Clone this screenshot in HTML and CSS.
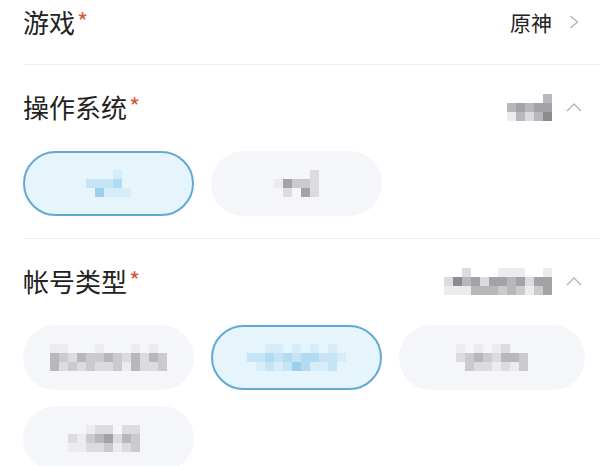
FILE: index.html
```html
<!DOCTYPE html>
<html lang="zh">
<head>
<meta charset="utf-8">
<link rel="stylesheet" href="styles.css">
</head>
<body>
<div class="form">
  <div class="row row-top">
    <div class="label">游戏<span class="req">*</span></div>
    <div class="value">
      <span class="value-text">原神</span>
      <svg class="chev-right" width="10" height="14" viewBox="0 0 10 14"><polyline points="1.5,1 8.5,7 1.5,13" fill="none" stroke="#b4b4b4" stroke-width="1.4"/></svg>
    </div>
  </div>
  <div class="divider"></div>

  <div class="section">
    <div class="row">
      <div class="label">操作系统<span class="req">*</span></div>
      <div class="value">
        <div class="mosaic">
          <div class="mr"><i></i><i></i><i></i><i></i><i class="g4"></i></div>
          <div class="mr"><i class="g4"></i><i class="g5"></i><i class="g4"></i><i class="g5"></i><i class="g5"></i></div>
          <div class="mr"><i class="g1"></i><i class="g4"></i><i class="g2"></i><i class="g4"></i><i class="g6"></i></div>
        </div>
        <svg class="chev-up" width="16" height="10" viewBox="0 0 16 10"><polyline points="1,9 8,2 15,9" fill="none" stroke="#b4b4b4" stroke-width="1.4"/></svg>
      </div>
    </div>
    <div class="chips">
      <div class="chip chip-on">
        <div class="mosaic">
          <div class="mr"><i></i><i></i><i></i><i class="b1"></i><i></i></div>
          <div class="mr"><i class="b2"></i><i class="b2"></i><i class="b2"></i><i class="b3"></i><i></i></div>
          <div class="mr"><i></i><i class="b4"></i><i class="b1"></i><i class="b1"></i><i class="b1"></i></div>
        </div>
      </div>
      <div class="chip">
        <div class="mosaic">
          <div class="mr"><i></i><i></i><i></i><i></i><i class="g2"></i></div>
          <div class="mr"><i class="g1"></i><i class="g5"></i><i class="g3"></i><i class="g3"></i><i class="g2"></i></div>
          <div class="mr"><i></i><i class="g2"></i><i></i><i class="g5"></i><i class="g2"></i></div>
        </div>
      </div>
    </div>
  </div>
  <div class="divider"></div>

  <div class="section">
    <div class="row">
      <div class="label">帐号类型<span class="req">*</span></div>
      <div class="value">
        <div class="mosaic">
          <div class="mr"><i></i><i></i><i class="g2"></i><i></i><i></i><i></i><i class="g1"></i><i class="g1"></i><i class="g1"></i><i></i><i></i><i class="g1"></i></div>
          <div class="mr"><i class="g2"></i><i class="g6"></i><i class="g4"></i><i class="g5"></i><i class="g2"></i><i class="g5"></i><i class="g5"></i><i class="g4"></i><i class="g5"></i><i class="g2"></i><i class="g5"></i><i class="g5"></i></div>
          <div class="mr"><i class="g1"></i><i class="g1"></i><i class="g1"></i><i class="g4"></i><i class="g4"></i><i class="g4"></i><i class="g3"></i><i class="g4"></i><i class="g3"></i><i class="g1"></i><i class="g3"></i><i class="g5"></i></div>
        </div>
        <svg class="chev-up" width="16" height="10" viewBox="0 0 16 10"><polyline points="1,9 8,2 15,9" fill="none" stroke="#b4b4b4" stroke-width="1.4"/></svg>
      </div>
    </div>
    <div class="chips">
      <div class="chip">
        <div class="mosaic">
          <div class="mr"><i class="g1"></i><i class="g1"></i><i></i><i></i><i></i><i class="g1"></i><i></i><i></i><i></i><i class="g1"></i><i></i><i class="g1"></i><i></i></div>
          <div class="mr"><i class="g4"></i><i class="g3"></i><i class="g2"></i><i class="g4"></i><i class="g3"></i><i class="g3"></i><i class="g4"></i><i class="g3"></i><i class="g2"></i><i class="g4"></i><i class="g2"></i><i class="g4"></i><i class="g3"></i></div>
          <div class="mr"><i class="g4"></i><i class="g2"></i><i class="g3"></i><i class="g2"></i><i class="g3"></i><i class="g2"></i><i class="g2"></i><i class="g3"></i><i class="g1"></i><i class="g4"></i><i class="g2"></i><i class="g2"></i><i class="g3"></i></div>
        </div>
      </div>
      <div class="chip chip-on">
        <div class="mosaic">
          <div class="mr"><i></i><i></i><i class="b1"></i><i class="b1"></i><i></i><i class="b1"></i><i></i><i class="b1"></i><i></i><i class="b1"></i><i></i></div>
          <div class="mr"><i class="b2"></i><i class="b2"></i><i class="b3"></i><i class="b2"></i><i class="b3"></i><i class="b2"></i><i class="b3"></i><i class="b3"></i><i class="b2"></i><i class="b2"></i><i class="b1"></i></div>
          <div class="mr"><i></i><i class="b1"></i><i class="b2"></i><i class="b1"></i><i class="b2"></i><i class="b4"></i><i class="b3"></i><i class="b1"></i><i class="b1"></i><i class="b2"></i><i></i></div>
        </div>
      </div>
      <div class="chip chip-wide">
        <div class="mosaic">
          <div class="mr"><i class="g1"></i><i></i><i class="g1"></i><i></i><i class="g1"></i><i class="g2"></i><i></i><i></i></div>
          <div class="mr"><i class="g2"></i><i class="g3"></i><i class="g4"></i><i class="g3"></i><i class="g2"></i><i class="g4"></i><i class="g4"></i><i class="g3"></i></div>
          <div class="mr"><i></i><i class="g3"></i><i class="g2"></i><i class="g2"></i><i class="g1"></i><i class="g2"></i><i class="g1"></i><i class="g3"></i></div>
        </div>
      </div>
      <div class="chip">
        <div class="mosaic">
          <div class="mr"><i></i><i></i><i class="g1"></i><i class="g2"></i><i class="g2"></i><i></i><i class="g2"></i><i class="g2"></i><i></i></div>
          <div class="mr"><i class="g2"></i><i class="g1"></i><i class="g3"></i><i class="g4"></i><i class="g5"></i><i class="g2"></i><i class="g4"></i><i class="g3"></i><i></i></div>
          <div class="mr"><i class="g1"></i><i class="g1"></i><i class="g2"></i><i class="g2"></i><i class="g3"></i><i class="g1"></i><i class="g2"></i><i class="g3"></i><i></i></div>
        </div>
      </div>
    </div>
  </div>
</div>
</body>
</html>
```
FILE: styles.css
```css
* { box-sizing: border-box; }
html, body { margin: 0; padding: 0; background: #ffffff; }
body {
  font-family: "Noto Sans CJK SC", "Noto Sans", sans-serif;
  color: #222222;
  overflow: hidden;
  width: 600px;
  height: 466px;
}
.form { padding-left: 23px; }
.row {
  display: flex;
  align-items: center;
  justify-content: space-between;
  height: 44px;
}
.row-top { margin-bottom: 20px; }
.label {
  font-size: 26px;
  line-height: 44px;
  letter-spacing: 0;
  color: #222;
  display: flex;
  align-items: flex-start;
}
.req {
  color: #d7553f;
  font-size: 24px;
  line-height: 1;
  margin-left: 2px;
  margin-top: 9px;
}
.value {
  display: flex;
  align-items: center;
  padding-right: 18px;
}
.row-top .value { padding-right: 21px; }
.value-text {
  font-size: 21px;
  color: #222;
  margin-right: 17px;
}
.chev-right { display: block; }
.chev-up { display: block; margin-left: 14px; }
.divider {
  height: 1px;
  background: #efefef;
}
.section { padding-top: 20px; }
.section .row { margin-bottom: 22px; }
.chips {
  display: flex;
  flex-wrap: wrap;
  column-gap: 17px;
  row-gap: 16px;
  padding-bottom: 22px;
}
.chip {
  width: 171px;
  height: 65px;
  border-radius: 33px;
  background: #f5f6f9;
  display: flex;
  align-items: center;
  justify-content: center;
}
.chip-wide { width: 186px; }
.chip-on {
  background: #e6f4fc;
  border: 2px solid #62aad3;
}
.mosaic {
  display: flex;
  flex-direction: column;
}
.mr { display: flex; }
.mr i {
  display: block;
  width: 9px;
  height: 9px;
}
.g1 { background: #ececef; }
.g2 { background: #dcdce0; }
.g3 { background: #cbcbcf; }
.g4 { background: #b8b8bc; }
.g5 { background: #a3a3a7; }
.g6 { background: #8c8c90; }
.b1 { background: #d6ecf8; }
.b2 { background: #c5e4f5; }
.b3 { background: #b2dbf1; }
.b4 { background: #9ccfec; }
```
